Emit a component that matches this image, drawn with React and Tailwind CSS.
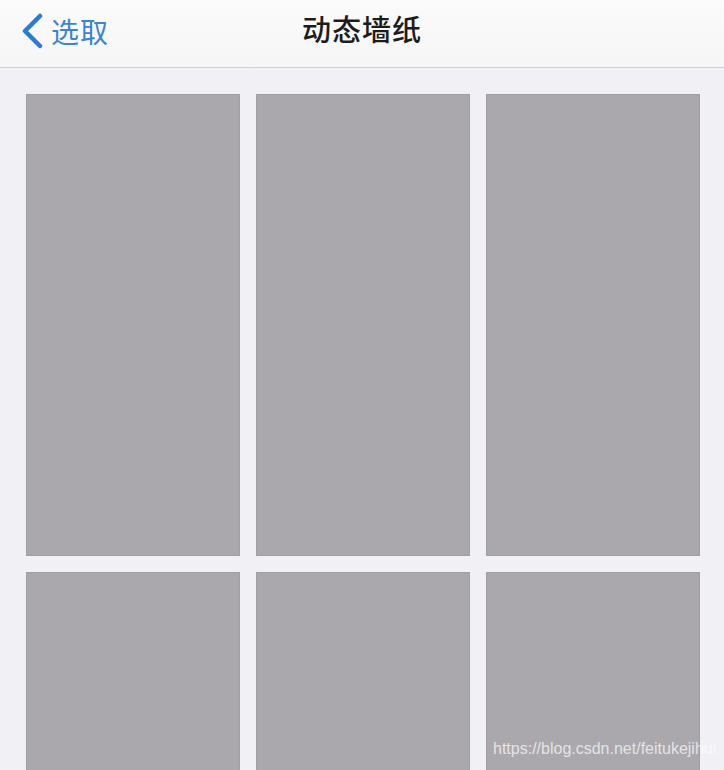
const tiles = [1, 2, 3, 4, 5, 6];

function BackChevron() {
  return (
    <svg width="26" height="36" viewBox="0 0 26 36" fill="none" aria-hidden="true">
      <path
        d="M21 3 L6 18 L21 33"
        stroke="#2b7bd3"
        strokeWidth="4.5"
        strokeLinecap="round"
        strokeLinejoin="round"
      />
    </svg>
  );
}

export default function App() {
  return (
    <div
      className="relative w-[724px] h-[770px] overflow-hidden bg-[#f1f0f5]"
      style={{ fontFamily: '"Noto Sans CJK SC", "Noto Sans", sans-serif' }}
    >
      <header className="relative h-[68px] bg-gradient-to-b from-[#fbfbfb] to-[#f6f6f7] border-b border-[#cfcfd3] flex items-center">
        <div className="flex items-center pl-[19px] pb-[6px] gap-[6px]">
          <BackChevron />
          <span className="text-[28px] leading-none text-[#3a85d2] tracking-[1px]">选取</span>
        </div>
        <h1 className="absolute left-0 right-0 top-[11px] text-center text-[29px] leading-[34px] text-[#1c1c1c] font-medium tracking-[1px]">
          动态墙纸
        </h1>
      </header>

      <main className="pl-[26px] pr-[24px] pt-[26px]">
        <div className="grid grid-cols-3 gap-[16px]">
          {tiles.map((id) => (
            <div key={id} className="h-[462px] bg-[#aba8ad] border border-[#a09da3]" />
          ))}
        </div>
      </main>

      <span
        className="absolute left-[493px] top-[738px] text-[16px] leading-[22px] text-white/70"
        style={{ fontFamily: '"Liberation Sans", Arial, sans-serif' }}
      >
        https://blog.csdn.net/feitukejihui
      </span>
    </div>
  );
}
